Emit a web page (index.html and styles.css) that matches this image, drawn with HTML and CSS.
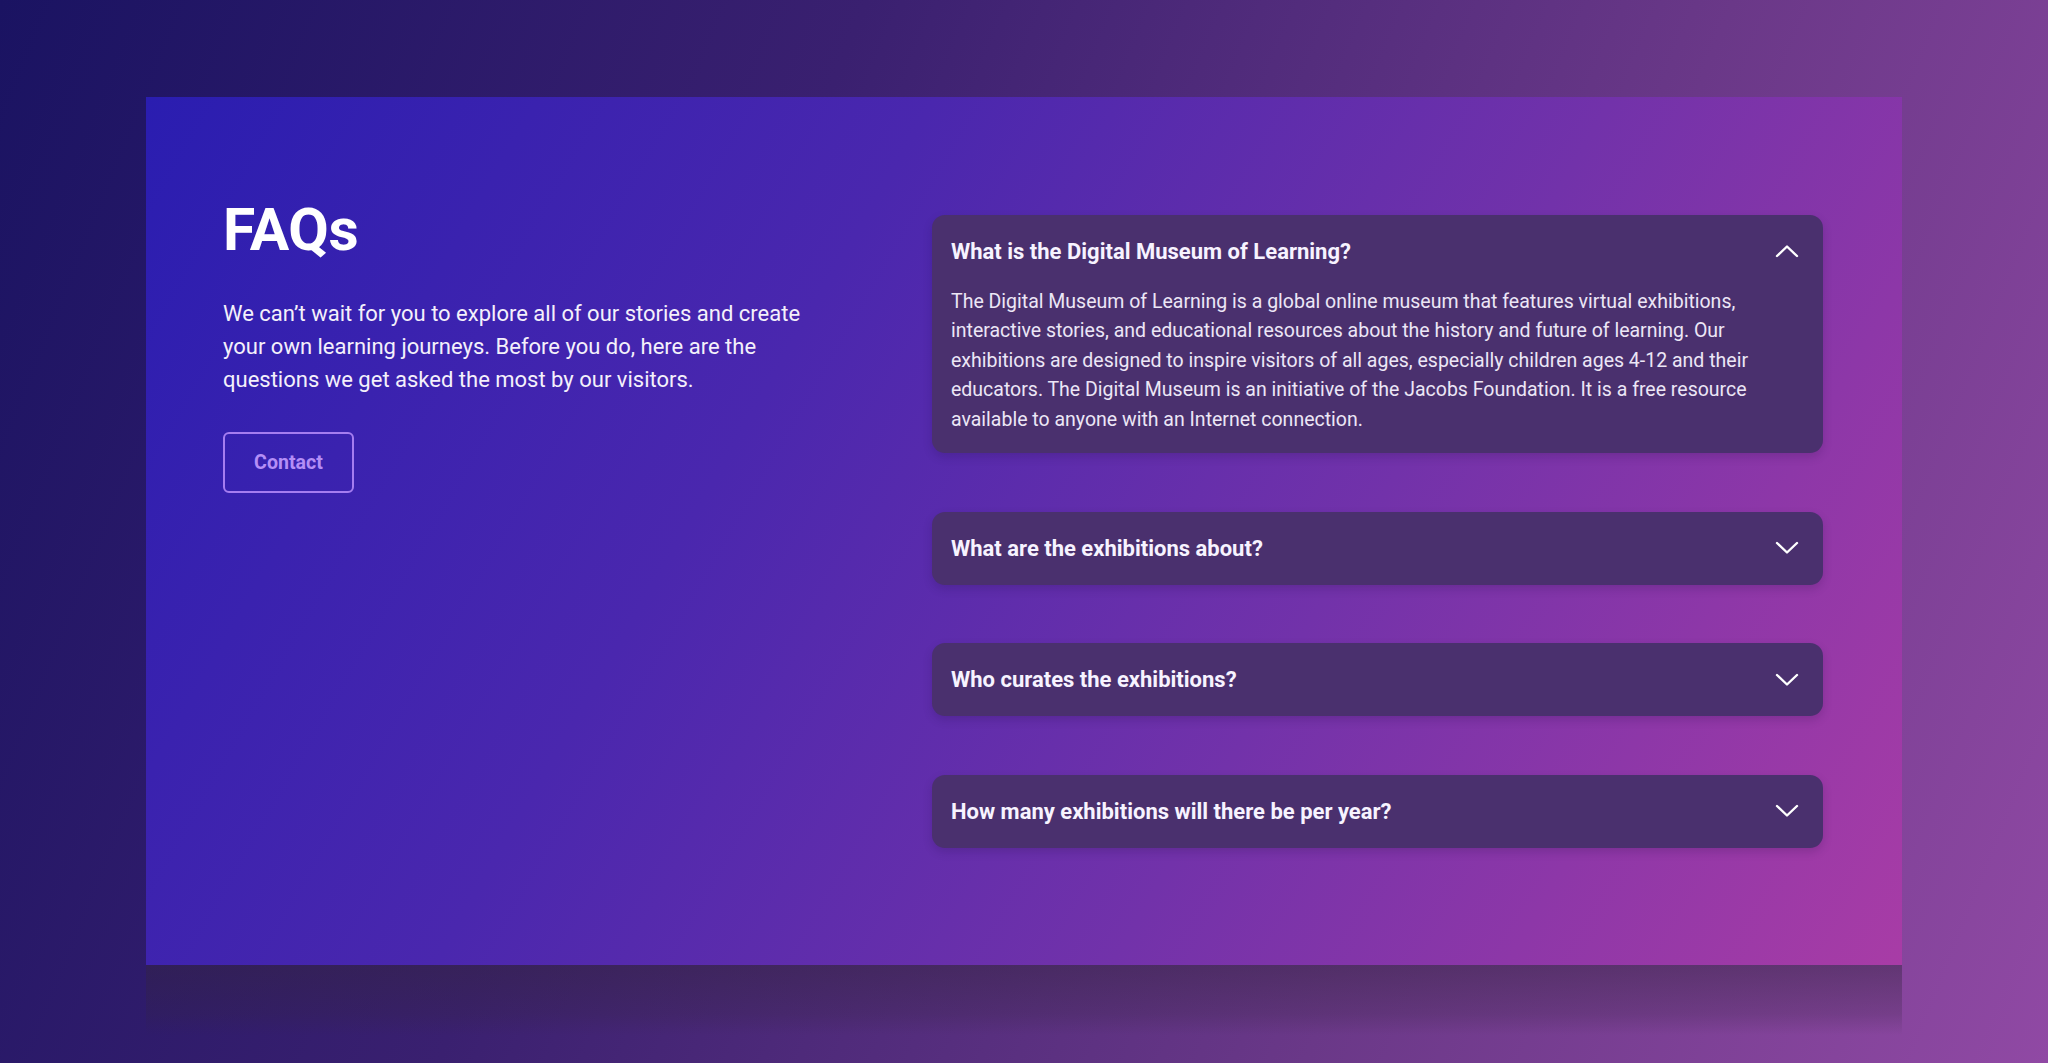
FILE: index.html
```html
<!DOCTYPE html>
<html lang="en">
<head>
<meta charset="utf-8">
<title>FAQs</title>
<link rel="stylesheet" href="styles.css">
</head>
<body>
<div class="stage">
  <section class="card">
    <div class="intro">
      <h1 class="title">FAQs</h1>
      <p class="lead">We can’t wait for you to explore all of our stories and create your own learning journeys. Before you do, here are the questions we get asked the most by our visitors.</p>
      <button class="contact" type="button">Contact</button>
    </div>
    <div class="faq-list">
      <div class="faq open">
        <div class="faq-head">
          <span class="faq-q">What is the Digital Museum of Learning?</span>
          <svg class="chev" width="24" height="14" viewBox="0 0 24 14"><polyline points="2,12 12,2.5 22,12" fill="none" stroke="#ffffff" stroke-width="2.4" stroke-linecap="round" stroke-linejoin="round"/></svg>
        </div>
        <p class="faq-a">The Digital Museum of Learning is a global online museum that features virtual exhibitions, interactive stories, and educational resources about the history and future of learning. Our exhibitions are designed to inspire visitors of all ages, especially children ages 4-12 and their educators. The Digital Museum is an initiative of the Jacobs Foundation. It is a free resource available to anyone with an Internet connection.</p>
      </div>
      <div class="faq">
        <div class="faq-head">
          <span class="faq-q">What are the exhibitions about?</span>
          <svg class="chev" width="24" height="14" viewBox="0 0 24 14"><polyline points="2,2 12,11.5 22,2" fill="none" stroke="#ffffff" stroke-width="2.4" stroke-linecap="round" stroke-linejoin="round"/></svg>
        </div>
      </div>
      <div class="faq">
        <div class="faq-head">
          <span class="faq-q">Who curates the exhibitions?</span>
          <svg class="chev" width="24" height="14" viewBox="0 0 24 14"><polyline points="2,2 12,11.5 22,2" fill="none" stroke="#ffffff" stroke-width="2.4" stroke-linecap="round" stroke-linejoin="round"/></svg>
        </div>
      </div>
      <div class="faq">
        <div class="faq-head">
          <span class="faq-q">How many exhibitions will there be per year?</span>
          <svg class="chev" width="24" height="14" viewBox="0 0 24 14"><polyline points="2,2 12,11.5 22,2" fill="none" stroke="#ffffff" stroke-width="2.4" stroke-linecap="round" stroke-linejoin="round"/></svg>
        </div>
      </div>
    </div>
  </section>
  <div class="shade"></div>
</div>
</body>
</html>
```

FILE: styles.css
```css
* { box-sizing: border-box; }

html, body {
  margin: 0;
  height: 1063px;
  overflow: hidden;
}

body {
  font-family: Roboto, "Liberation Sans", Arial, sans-serif;
  background: linear-gradient(112deg, #1a1362 0%, #3a2070 35%, #6a3888 70%, #9049a4 100%);
  color: #ffffff;
}

.stage {
  padding: 97px 0 0 146px;
}

.card {
  width: 1756px;
  height: 868px;
  display: flex;
  align-items: flex-start;
  padding: 98px 79px 0 77px;
  background: linear-gradient(120deg, #2a1db0 0%, #4a27ae 35%, #7232aa 65%, #a83ca6 100%);
}

.intro {
  width: 600px;
  flex: 0 0 auto;
}

.title {
  margin: 0;
  font-size: 58.8px;
  line-height: 1.2;
  font-weight: 700;
  color: #ffffff;
  letter-spacing: -0.3px;
}

.lead {
  margin: 31px 0 0;
  font-size: 22px;
  line-height: 33.3px;
  font-weight: 400;
  color: #f4f0fb;
}

.contact {
  margin-top: 36px;
  width: 131px;
  height: 61px;
  background: transparent;
  border: 2.5px solid #a57df0;
  border-radius: 6px;
  color: #b48ef6;
  font-family: Roboto, "Liberation Sans", Arial, sans-serif;
  font-size: 19.6px;
  font-weight: 700;
  padding: 0;
}

.faq-list {
  margin-left: auto;
  margin-top: 20px;
  width: 891px;
  display: flex;
  flex-direction: column;
  gap: 58.6px;
}

.faq {
  background: #4a306e;
  border-radius: 13px;
  box-shadow: 0 4px 10px rgba(30, 10, 60, 0.18);
}

.faq-head {
  height: 73px;
  display: flex;
  align-items: center;
  justify-content: space-between;
  padding: 0 24px 0 19px;
}

.open .faq-head {
  height: 72px;
}

.faq-q {
  font-size: 22px;
  font-weight: 700;
  color: #f7f3ff;
}

.chev {
  display: block;
}

.faq-a {
  margin: 0;
  padding: 0 40px 19px 19px;
  font-size: 19.5px;
  line-height: 29.4px;
  color: #ece6f6;
}

.shade {
  width: 1756px;
  height: 70px;
  background: linear-gradient(to bottom, rgba(52, 36, 64, 0.45), rgba(52, 36, 64, 0.22) 70%, rgba(52, 36, 64, 0));
}
```
